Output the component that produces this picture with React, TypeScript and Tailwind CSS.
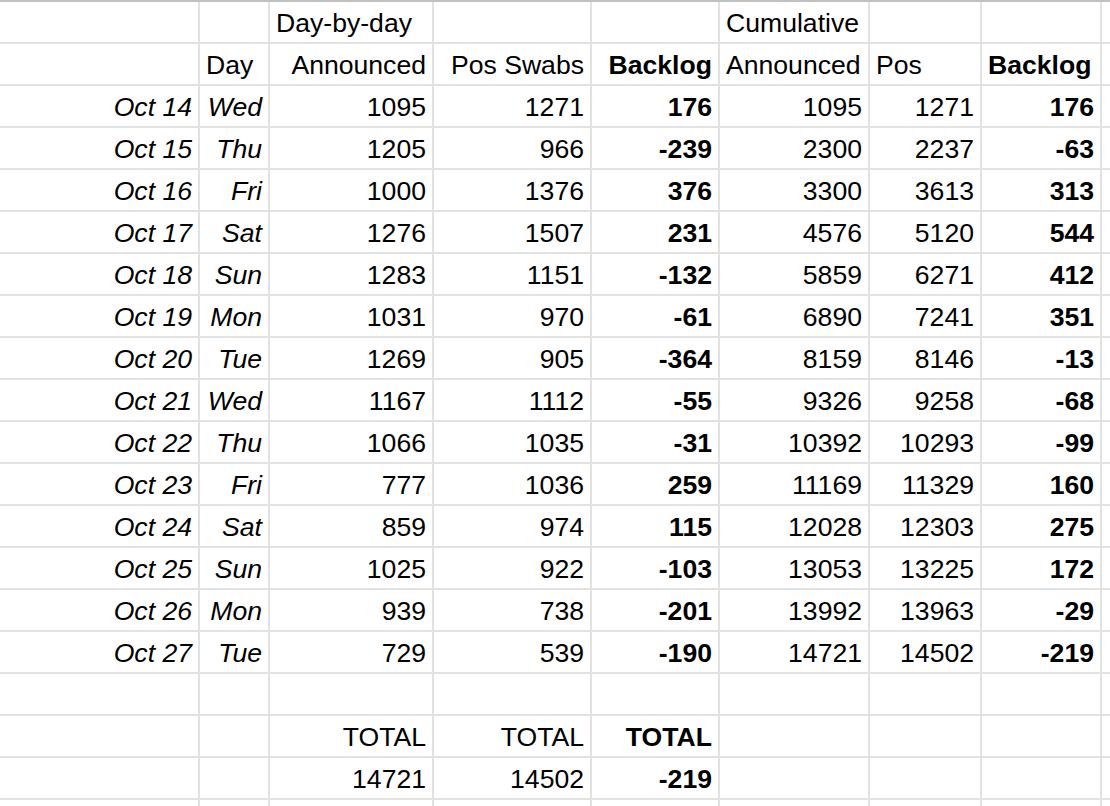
import React from "react";

type Cell = { t?: string; a?: "l" | "r"; b?: boolean; i?: boolean };

const dataRows: [string, string, number, number, number, number, number, number][] = [
  ["Oct 14", "Wed", 1095, 1271, 176, 1095, 1271, 176],
  ["Oct 15", "Thu", 1205, 966, -239, 2300, 2237, -63],
  ["Oct 16", "Fri", 1000, 1376, 376, 3300, 3613, 313],
  ["Oct 17", "Sat", 1276, 1507, 231, 4576, 5120, 544],
  ["Oct 18", "Sun", 1283, 1151, -132, 5859, 6271, 412],
  ["Oct 19", "Mon", 1031, 970, -61, 6890, 7241, 351],
  ["Oct 20", "Tue", 1269, 905, -364, 8159, 8146, -13],
  ["Oct 21", "Wed", 1167, 1112, -55, 9326, 9258, -68],
  ["Oct 22", "Thu", 1066, 1035, -31, 10392, 10293, -99],
  ["Oct 23", "Fri", 777, 1036, 259, 11169, 11329, 160],
  ["Oct 24", "Sat", 859, 974, 115, 12028, 12303, 275],
  ["Oct 25", "Sun", 1025, 922, -103, 13053, 13225, 172],
  ["Oct 26", "Mon", 939, 738, -201, 13992, 13963, -29],
  ["Oct 27", "Tue", 729, 539, -190, 14721, 14502, -219],
];

const E: Cell = {};

const rows: Cell[][] = [
  [E, E, { t: "Day-by-day", a: "l" }, E, E, { t: "Cumulative", a: "l" }, E, E, E],
  [
    E,
    { t: "Day", a: "l" },
    { t: "Announced", a: "r" },
    { t: "Pos Swabs", a: "r" },
    { t: "Backlog", a: "r", b: true },
    { t: "Announced", a: "l" },
    { t: "Pos", a: "l" },
    { t: "Backlog", a: "l", b: true },
    E,
  ],
  ...dataRows.map((r) => [
    { t: r[0], a: "r" as const, i: true },
    { t: r[1], a: "r" as const, i: true },
    { t: String(r[2]), a: "r" as const },
    { t: String(r[3]), a: "r" as const },
    { t: String(r[4]), a: "r" as const, b: true },
    { t: String(r[5]), a: "r" as const },
    { t: String(r[6]), a: "r" as const },
    { t: String(r[7]), a: "r" as const, b: true },
    E,
  ]),
  [E, E, E, E, E, E, E, E, E],
  [E, E, { t: "TOTAL", a: "r" }, { t: "TOTAL", a: "r" }, { t: "TOTAL", a: "r", b: true }, E, E, E, E],
  [E, E, { t: "14721", a: "r" }, { t: "14502", a: "r" }, { t: "-219", a: "r", b: true }, E, E, E, E],
  [E, E, E, E, E, E, E, E, E],
];

export default function App() {
  return (
    <div className="w-[1110px] h-[806px] overflow-hidden bg-white">
      <div
        className="border-t-2 border-[#c0c0c0] bg-[#e2e2e2] grid gap-[2px] grid-cols-[198px_68px_162px_156px_126px_148px_110px_118px_1fr] auto-rows-[40px] text-black text-[26.6px] leading-[30px]"
        style={{ fontFamily: '"Liberation Sans", Arial, sans-serif' }}
      >
        {rows.map((row, ri) =>
          row.map((c, ci) => (
            <div
              key={`${ri}-${ci}`}
              className={`bg-white flex items-end pb-[4px] px-[6px] whitespace-nowrap overflow-visible ${
                c.a === "r" ? "justify-end" : "justify-start"
              } ${c.b ? "font-bold" : ""} ${c.i ? "italic" : ""}`}
            >
              {c.t ?? ""}
            </div>
          ))
        )}
      </div>
    </div>
  );
}
